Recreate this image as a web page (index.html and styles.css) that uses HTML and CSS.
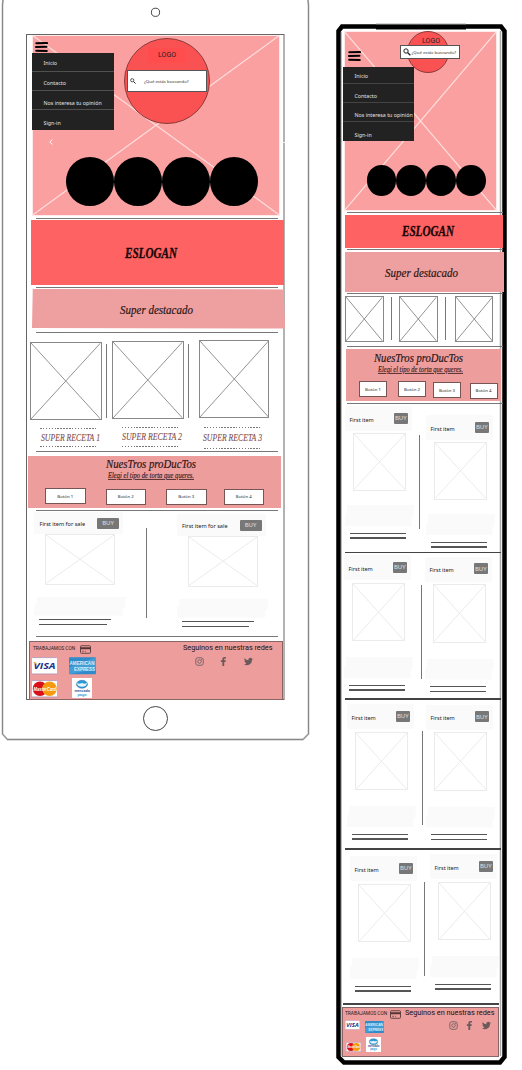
FILE: index.html
```html
<!DOCTYPE html>
<html lang="es">
<head>
<meta charset="utf-8">
<title>Pastelería</title>
<link rel="stylesheet" href="styles.css">
</head>
<body>
<svg class="defs" aria-hidden="true">
  <symbol id="cross" viewBox="0 0 100 100" preserveAspectRatio="none"><path d="M0 0L100 100M100 0L0 100" vector-effect="non-scaling-stroke"/></symbol>
  <symbol id="burger" viewBox="0 0 12 10"><path d="M.8 1.3L11.6 1.1M.4 5L11 4.7M.7 8.7L11.3 8.9" stroke="#000" stroke-width="2" stroke-linecap="round"/></symbol>
  <symbol id="search" viewBox="0 0 24 24"><circle cx="9" cy="9" r="6.5" fill="none" stroke="#222" stroke-width="3"/><path d="M14 14L22 22" stroke="#222" stroke-width="4"/></symbol>
  <symbol id="card" viewBox="0 0 22 17"><rect x="1" y="1" width="20" height="15" rx="1.5" fill="none" stroke="#644" stroke-width="2"/><path d="M1 6H21" stroke="#533" stroke-width="4"/><path d="M4 12H8M10 12H12" stroke="#644" stroke-width="1.5"/></symbol>
  <symbol id="instagram" viewBox="0 0 24 24"><g fill="none" stroke="#706060" stroke-width="2.4"><rect x="2" y="2" width="20" height="20" rx="5.5"/><circle cx="12" cy="12" r="4.7"/></g><circle cx="17.7" cy="6.3" r="1.5" fill="#706060"/></symbol>
  <symbol id="facebook" viewBox="0 0 24 24"><path fill="#6a5a5a" d="M9 24V13H5V8.700H9V6C9 2 11.300 0 15 0C16.700 0 18.500.3 18.500.3V4.200H16.500C14.500 4.200 13.900 5.300 13.900 6.600V8.700H18.200L17.500 13H13.900V24Z"/></symbol>
  <symbol id="twitter" viewBox="0 0 24 24"><path fill="#6a5a5a" d="M24 4.600a10 10 0 0 1-2.800.8 5 5 0 0 0 2.100-2.700 10 10 0 0 1-3.100 1.200 4.900 4.900 0 0 0-8.400 4.500A14 14 0 0 1 1.700 3.100a4.900 4.900 0 0 0 1.500 6.600 5 5 0 0 1-2.200-.6v.1a4.900 4.900 0 0 0 3.900 4.800 5 5 0 0 1-2.200.1 4.900 4.900 0 0 0 4.600 3.400A10 10 0 0 1 0 19.500a14 14 0 0 0 21.500-12.400A10 10 0 0 0 24 4.600z"/></symbol>
</svg>

<main class="tablet">
  <svg class="frame" width="322" height="745" fill="none">
    <path d="M3 0L2.500 5V734L7.500 739.500H303L308.500 734V5L308 0" stroke="#bbb" stroke-width="1.800"/>
    <path d="M3 0L2.500 5V734L7.500 739.500H303L308.500 734V5L308 0" stroke="#666" stroke-width=".6"/>
    <rect x="26.500" y="34.500" width="257.500" height="665" stroke="#666"/>
    <path d="M283.500 142.500H285" stroke="#fff"/>
    <circle cx="155.500" cy="12.300" r="4.100" stroke="#444"/>
    <circle cx="155.500" cy="718.500" r="12" stroke="#444"/>
  </svg>

  <header class="hero">
    <svg class="cross hero-cross"><use href="#cross"/></svg>
    <svg class="burger"><use href="#burger"/></svg>
    <nav class="menu"><a>Inicio</a><a>Contacto</a><a>Nos interesa tu opinión</a><a>Sign-in</a></nav>
    <div class="logo"><span>LOGO</span></div>
    <div class="search"><svg><use href="#search"/></svg><span>¿Qué estás buscando?</span></div>
    <svg class="chevron" viewBox="0 0 4 6"><path d="M3.500.5L.8 3L3.500 5.500" fill="none" stroke="#fff" stroke-width=".9"/></svg>
    <div class="dots"><i></i><i></i><i></i><i></i></div>
  </header>
  <hr class="rule">
  <section class="slogan"><svg width="56" height="22"><text x="1" y="15.500" textLength="52" lengthAdjust="spacingAndGlyphs" class="lobster">ESLOGAN</text></svg></section>
  <hr class="rule">
  <section class="featured"><svg width="76" height="22"><text x="1" y="15.500" textLength="73" lengthAdjust="spacingAndGlyphs" class="script">Super destacado</text></svg></section>
  <hr class="rule">
  <section class="gallery">
    <svg class="cross pic pic-a"><use href="#cross"/></svg><i class="bar"></i>
    <svg class="cross pic pic-b"><use href="#cross"/></svg><i class="bar"></i>
    <svg class="cross pic pic-c"><use href="#cross"/></svg>
  </section>
  <section class="recipes">
    <div class="recipe recipe-a"><svg><text x="1" y="11" textLength="59" lengthAdjust="spacingAndGlyphs">SUPER RECETA 1</text></svg></div>
    <div class="recipe recipe-b"><svg><text x="0" y="11.500" textLength="60" lengthAdjust="spacingAndGlyphs">SUPER RECETA 2</text></svg></div>
    <div class="recipe recipe-c"><svg><text x="1" y="11" textLength="59" lengthAdjust="spacingAndGlyphs">SUPER RECETA 3</text></svg></div>
  </section>
  <hr class="rule">
  <section class="products">
    <svg class="products-title" width="94" height="28"><text x="1" y="11.500" textLength="90" lengthAdjust="spacingAndGlyphs" class="script">NuesTros proDucTos</text><text x="3" y="22" textLength="86" lengthAdjust="spacingAndGlyphs" class="script-small">Elegi el tipo de torta que queres.</text></svg>
    <div class="buttons"><button>Botón 1</button><button>Botón 2</button><button>Botón 3</button><button>Botón 4</button></div>
  </section>
  <hr class="rule">
  <section class="shelf">
    <article class="item"><div class="item-head"><span>First item for sale</span><b>BUY</b></div><svg class="cross photo"><use href="#cross"/></svg><div class="band"></div><i class="line"></i><i class="line short"></i></article>
    <i class="split"></i>
    <article class="item second"><div class="item-head"><span>First item for sale</span><b>BUY</b></div><svg class="cross photo"><use href="#cross"/></svg><div class="band"></div><i class="line"></i><i class="line short"></i></article>
  </section>
  <hr class="rule">
  <footer class="footer">
    <div class="pay">
      <div class="pay-title"><span>TRABAJAMOS CON</span><svg><use href="#card"/></svg></div>
      <div class="brands">
        <svg class="visa" viewBox="0 0 54 34"><rect x=".7" y=".7" width="52.600" height="32.600" rx="2" fill="#fff" stroke="#a58ab0" stroke-width="1.400"/><text x="5" y="24" textLength="44" lengthAdjust="spacingAndGlyphs" class="visa-mark">VISA</text><path d="M4 10H10L12 16Z" fill="#e9a63a"/></svg>
        <svg class="amex" viewBox="0 0 54 34"><rect width="54" height="34" rx="2" fill="#2f8bc9"/><path d="M0 34V20L54 0V24Z" fill="#59afe0" opacity=".5"/><text x="1" y="15" textLength="50" lengthAdjust="spacingAndGlyphs" class="amex-mark">AMERICAN</text><text x="10" y="28" textLength="42" lengthAdjust="spacingAndGlyphs" class="amex-mark">EXPRESS</text></svg>
        <svg class="mc" viewBox="0 0 54 34"><rect x=".7" y=".7" width="52.600" height="32.600" rx="2" fill="#fff" stroke="#a58ab0" stroke-width="1.400"/><circle cx="18" cy="17" r="14.500" fill="#d8101c"/><circle cx="37" cy="17" r="14.500" fill="#f79a10"/><text x="5" y="21" textLength="45" lengthAdjust="spacingAndGlyphs" class="mc-mark">MasterCard</text></svg>
        <svg class="mp" viewBox="0 0 40 40"><rect width="40" height="40" fill="#fff"/><ellipse cx="20" cy="12.500" rx="11" ry="8" fill="#2a9bd8" stroke="#2a4f8f" stroke-width=".8"/><path d="M9.500 10Q15 13 20 10Q25 13 30.500 10L28 15Q20 20 12 15Z" fill="#e8f6fc"/><text x="5" y="27" textLength="31" lengthAdjust="spacingAndGlyphs" class="mp-mark">mercado</text><text x="11" y="35" textLength="18" lengthAdjust="spacingAndGlyphs" class="mp-mark mp-light">pago</text></svg>
      </div>
    </div>
    <div class="social"><span>Seguinos en nuestras redes</span><div class="nets"><svg><use href="#instagram"/></svg><svg><use href="#facebook"/></svg><svg><use href="#twitter"/></svg></div></div>
  </footer>
</main>

<main class="phone">
  <svg class="frame" width="200" height="1070" fill="none">
    <path d="M20 26.500H179L182.500 31V1057L178 1062.500H22L16.500 1057V31Z" stroke="#000" stroke-width="4.500"/>
    <path d="M54 27H144" stroke="#000" stroke-width="5"/>
    <path d="M54 24.200H144" stroke="#777" stroke-width="1"/>
    <path d="M178.500 31V1056" stroke="#aaa" stroke-width="1.500"/>
    <path d="M19.500 32V1056" stroke="#bbb" stroke-width="1"/>
  </svg>

  <header class="hero">
    <svg class="cross hero-cross"><use href="#cross"/></svg>
    <svg class="burger"><use href="#burger"/></svg>
    <nav class="menu"><a>Inicio</a><a>Contacto</a><a>Nos interesa tu opinión</a><a>Sign-in</a></nav>
    <div class="logo"><span>LOGO</span></div>
    <div class="search"><svg><use href="#search"/></svg><span>¿Qué estás buscando?</span></div>
    <div class="dots"><i></i><i></i><i></i><i></i></div>
  </header>
  <hr class="rule">
  <section class="slogan"><svg width="56" height="22"><text x="1" y="15.500" textLength="52" lengthAdjust="spacingAndGlyphs" class="lobster">ESLOGAN</text></svg></section>
  <hr class="rule">
  <section class="featured"><svg width="76" height="22"><text x="1" y="15.500" textLength="73" lengthAdjust="spacingAndGlyphs" class="script">Super destacado</text></svg></section>
  <hr class="rule">
  <section class="gallery">
    <svg class="cross pic pic-a"><use href="#cross"/></svg><i class="bar"></i>
    <svg class="cross pic pic-b"><use href="#cross"/></svg><i class="bar"></i>
    <svg class="cross pic pic-c"><use href="#cross"/></svg>
  </section>
  <hr class="rule">
  <section class="products">
    <svg class="products-title" width="94" height="28"><text x="1" y="13" textLength="89" lengthAdjust="spacingAndGlyphs" class="script">NuesTros proDucTos</text><text x="5" y="23" textLength="85" lengthAdjust="spacingAndGlyphs" class="script-small">Elegi el tipo de torta que queres.</text></svg>
    <div class="buttons"><button>Botón 1</button><button>Botón 2</button><button>Botón 3</button><button>Botón 4</button></div>
  </section>
  <hr class="rule">
  <section class="shelf row-one">
    <article class="item"><div class="item-head"><span>First item</span><b>BUY</b></div><svg class="cross photo"><use href="#cross"/></svg><div class="band"></div><i class="line"></i><i class="line"></i></article>
    <i class="split"></i>
    <article class="item second"><div class="item-head"><span>First item</span><b>BUY</b></div><svg class="cross photo"><use href="#cross"/></svg><div class="band"></div><i class="line"></i><i class="line"></i></article>
  </section>
  <hr class="rule thick">
  <section class="shelf row-two">
    <article class="item"><div class="item-head"><span>First item</span><b>BUY</b></div><svg class="cross photo"><use href="#cross"/></svg><div class="band"></div><i class="line"></i><i class="line"></i></article>
    <i class="split"></i>
    <article class="item second"><div class="item-head"><span>First item</span><b>BUY</b></div><svg class="cross photo"><use href="#cross"/></svg><div class="band"></div><i class="line"></i><i class="line"></i></article>
  </section>
  <hr class="rule thick">
  <section class="shelf row-three">
    <article class="item"><div class="item-head"><span>First item</span><b>BUY</b></div><svg class="cross photo"><use href="#cross"/></svg><div class="band"></div><i class="line"></i><i class="line"></i></article>
    <i class="split"></i>
    <article class="item second"><div class="item-head"><span>First item</span><b>BUY</b></div><svg class="cross photo"><use href="#cross"/></svg><div class="band"></div><i class="line"></i><i class="line"></i></article>
  </section>
  <hr class="rule thick">
  <section class="shelf row-four">
    <article class="item"><div class="item-head"><span>First item</span><b>BUY</b></div><svg class="cross photo"><use href="#cross"/></svg><div class="band"></div><i class="line"></i><i class="line"></i></article>
    <i class="split"></i>
    <article class="item second"><div class="item-head"><span>First item</span><b>BUY</b></div><svg class="cross photo"><use href="#cross"/></svg><div class="band"></div><i class="line"></i><i class="line"></i></article>
  </section>
  <hr class="rule thick last">
  <footer class="footer">
    <div class="pay">
      <div class="pay-title"><span>TRABAJAMOS CON</span><svg><use href="#card"/></svg></div>
      <div class="brands">
        <svg class="visa" viewBox="0 0 54 34"><rect x=".7" y=".7" width="52.600" height="32.600" rx="2" fill="#fff" stroke="#a58ab0" stroke-width="1.400"/><text x="5" y="24" textLength="44" lengthAdjust="spacingAndGlyphs" class="visa-mark">VISA</text><path d="M4 10H10L12 16Z" fill="#e9a63a"/></svg>
        <svg class="amex" viewBox="0 0 54 34"><rect width="54" height="34" rx="2" fill="#2f8bc9"/><path d="M0 34V20L54 0V24Z" fill="#59afe0" opacity=".5"/><text x="1" y="15" textLength="50" lengthAdjust="spacingAndGlyphs" class="amex-mark">AMERICAN</text><text x="10" y="28" textLength="42" lengthAdjust="spacingAndGlyphs" class="amex-mark">EXPRESS</text></svg>
        <svg class="mc" viewBox="0 0 54 34"><rect x=".7" y=".7" width="52.600" height="32.600" rx="2" fill="#fff" stroke="#a58ab0" stroke-width="1.400"/><circle cx="18" cy="17" r="14.500" fill="#d8101c"/><circle cx="37" cy="17" r="14.500" fill="#f79a10"/><text x="5" y="21" textLength="45" lengthAdjust="spacingAndGlyphs" class="mc-mark">MasterCard</text></svg>
        <svg class="mp" viewBox="0 0 40 40"><rect width="40" height="40" fill="#fff"/><ellipse cx="20" cy="12.500" rx="11" ry="8" fill="#2a9bd8" stroke="#2a4f8f" stroke-width=".8"/><path d="M9.500 10Q15 13 20 10Q25 13 30.500 10L28 15Q20 20 12 15Z" fill="#e8f6fc"/><text x="5" y="27" textLength="31" lengthAdjust="spacingAndGlyphs" class="mp-mark">mercado</text><text x="11" y="35" textLength="18" lengthAdjust="spacingAndGlyphs" class="mp-mark mp-light">pago</text></svg>
      </div>
    </div>
    <div class="social"><span>Seguinos en nuestras redes</span><div class="nets"><svg><use href="#instagram"/></svg><svg><use href="#facebook"/></svg><svg><use href="#twitter"/></svg></div></div>
  </footer>
</main>
</body>
</html>
```

FILE: styles.css
```css
* { box-sizing: border-box; }
body { margin: 0; width: 522px; height: 1070px; overflow: hidden; display: flex; align-items: flex-start; background: #fff; font-family: "Noto Sans", "Open Sans", sans-serif; color: #222; }
svg { display: block; flex: none; }
i { display: block; flex: none; }
.defs { position: absolute; width: 0; height: 0; }
.frame { position: absolute; left: 0; top: 0; z-index: -1; }
.tablet, .phone { position: relative; z-index: 0; flex: none; display: flex; flex-direction: column; align-items: flex-start; }
.tablet { width: 322px; padding-top: 35px; }
.phone { width: 200px; padding-top: 31px; }
section, header, footer { flex: none; }
.cross { fill: none; stroke: #777; stroke-width: .8px; }

/* Dividers */
.rule { flex: none; border: 0; height: 1px; background: #777; width: 242px; margin: 0 0 0 36px; }
.phone .rule { width: 156px; margin-left: 25px; }
.phone .thick { height: 1.5px; background: #444; margin-left: 22.5px; }
.phone .last { margin-left: 20.5px; }

/* Hero */
.hero { position: relative; background: #faa0a0; }
.tablet .hero { width: 248px; height: 180.5px; margin: 0 0 2.5px 32px; }
.phone .hero { width: 153px; height: 180px; margin: 0 0 1px 22px; }
.hero-cross { width: 100%; height: 100%; stroke: #ffdcdc; stroke-width: 1.2px; outline: 1px solid #ffe9e9; outline-offset: -1px; }
.burger { position: absolute; width: 13px; height: 10px; }
.tablet .burger { left: 3px; top: 6.5px; }
.phone .burger { left: 3.5px; top: 20px; }
.menu { position: absolute; background: #222; color: #e4e4e4; font-size: 5.300px; line-height: 20px; white-space: nowrap; }
.menu a { display: block; }
.tablet .menu { left: 0; top: 18px; width: 82px; height: 76.500px; padding-left: 11.5px; background: linear-gradient(#505050, #505050) 0 18px / 100% 1px no-repeat, linear-gradient(#505050, #505050) 0 37px / 100% 1px no-repeat, linear-gradient(#505050, #505050) 0 56px / 100% 1px no-repeat, #222; }
.phone .menu { left: -1px; top: 36px; width: 70.500px; height: 73.500px; padding-left: 11.5px; background: linear-gradient(#444, #444) 0 16px / 100% 1px no-repeat, linear-gradient(#444, #444) 0 35px / 100% 1px no-repeat, linear-gradient(#444, #444) 0 54px / 100% 1px no-repeat, #222; line-height: 19.600px; }
.logo { position: absolute; border: 1px solid #8a3a3a; border-radius: 50%; background: #fa5252; display: flex; justify-content: center; align-items: flex-start; font: 7px/15px Roboto, sans-serif; }
.logo span { background: #ff4d4d; }
.tablet .logo { left: 92px; top: 2.500px; width: 86px; height: 86px; padding-top: 9px; }
.tablet .logo span { padding: 0 10px; }
.phone .logo { left: 63px; top: 0; width: 42px; height: 42px; padding: 2px 0 0 6px; }
.phone .logo span { background: none; }
.search { position: absolute; display: flex; align-items: center; background: #fff; border: 1px solid #555; color: #333; white-space: nowrap; font-size: 4.300px; line-height: 6px; }
.tablet .search { left: 94.500px; top: 34.500px; width: 80.500px; height: 22px; padding-left: 2.500px; gap: 8px; }
.tablet .search svg { width: 6px; height: 6px; }
.phone .search { left: 56px; top: 14px; width: 60px; height: 13.500px; padding-left: 1.500px; gap: 1px; }
.phone .search svg { width: 8px; height: 8px; }
.chevron { position: absolute; left: 17px; top: 104px; width: 4px; height: 6px; }
.dots { position: absolute; display: flex; }
.dots i { border-radius: 50%; background: #000; }
.tablet .dots { left: 33.500px; top: 122px; }
.tablet .dots i { width: 48.200px; height: 48.800px; }
.phone .dots { left: 22.500px; top: 134px; }
.phone .dots i { width: 29.800px; height: 30.600px; }

/* Banners */
.slogan, .featured { display: flex; align-items: center; }
.slogan { background: #ff6262; }
.featured { background: #ee9f9f; }
.tablet .slogan { width: 253px; height: 65px; margin: 1px 0 2px 31px; padding-left: 92.500px; }
.tablet .featured { width: 253px; height: 39.500px; margin: 1px 0 3.500px 32px; padding-left: 87px; clip-path: polygon(.3% 0, 99.5% 1%, 100% 100%, 0 99%); }
.phone .slogan { width: 158px; height: 32.500px; margin: 2px 0 1.500px 23px; padding-left: 56px; }
.phone .featured { width: 159px; height: 39.500px; margin: 2px 0 1.500px 23px; padding-left: 39px; }
.lobster { font: italic bold 14px "Liberation Serif", serif; fill: #160606; stroke: #160606; stroke-width: .3px; }
.script { font: italic 13.500px "Liberation Serif", serif; fill: #2a1515; stroke: #2a1515; stroke-width: .2px; }
.script-small { font: italic 7.500px "Liberation Serif", serif; fill: #3a1c1c; stroke: #3a1c1c; stroke-width: .15px; text-decoration: underline; }

/* Recipe pictures */
.gallery { display: flex; align-items: flex-start; }
.pic { border: 1px solid #888; }
.bar, .split { width: 1px; background: #777; }
.tablet .gallery { height: 80px; margin: 7px 0 0 30px; }
.tablet .pic { width: 71.500px; height: 78px; }
.tablet .pic-a { margin: 2px 4.500px 0 0; }
.tablet .pic-b { margin: 1px 4.500px 0 5px; }
.tablet .pic-c { width: 70.500px; margin-left: 9.500px; }
.tablet .bar { height: 74px; margin-top: 3.500px; }
.phone .gallery { height: 46px; margin: 2px 0 4px 23px; }
.phone .pic { width: 38.500px; height: 46px; }
.phone .bar { height: 43px; margin: 1px 7px 0 7.500px; }
.phone .pic-c { margin-left: 1.500px; }
.recipes { display: flex; height: 31px; margin-left: 40px; }
.recipe { width: 56px; padding: 1px 0; background: repeating-linear-gradient(90deg, #777 0 1.500px, transparent 1.500px 2.900px) 0 0 / 100% 1.300px no-repeat, repeating-linear-gradient(90deg, #777 0 1.500px, transparent 1.500px 2.900px) 0 100% / 100% 1.300px no-repeat; }
.recipe svg { overflow: visible; width: 56px; height: 16px; }
.recipe text { font: italic 9.500px "Liberation Serif", serif; fill: #7d4b4b; stroke: #7d4b4b; stroke-width: .1px; }
.recipe-a { height: 19px; margin-top: 8px; }
.recipe-b { height: 20.500px; margin: 7px 0 0 26px; }
.recipe-c { height: 22.500px; margin: 7px 0 0 26px; }
.recipe-a svg { margin-top: 1px; }
.recipe-c svg { margin: 2px 0 0 -2px; }

/* Product filter */
.products { background: #ee9d9d; }
.tablet .products { width: 253px; height: 52px; margin: 3.500px 0 2.500px 28px; }
.phone .products { width: 155px; height: 52.500px; margin: 1.500px 0 2px 24px; }
.products-title { margin-left: 77px; }
.phone .products-title { margin-left: 27px; }
.buttons { display: flex; }
.buttons button { flex: none; padding: 0; border: 1px solid #755; background: #fff; color: #222; font: 4.300px/1 "Noto Sans", sans-serif; }
.tablet .buttons { margin: 5px 0 0 17px; gap: 20px; }
.tablet button { width: 40.500px; height: 16px; }
.tablet button:first-child { margin-top: -.5px; margin-bottom: .5px; }
.tablet button:last-child { margin-left: -3px; }
.phone .buttons { margin: 4.500px 0 0 13px; gap: 7px; }
.phone button { width: 28px; height: 16px; }
.phone button:nth-child(2) { margin-left: 4px; }
.phone button:nth-child(3) { margin-top: 1px; }
.phone button:nth-child(4) { margin: 1.500px 0 0 1.500px; }

/* Items for sale */
.shelf { display: flex; align-items: flex-start; }
.item { flex: none; }
.item-head { position: relative; display: flex; align-items: center; background: #fafafa; border-radius: 2px; white-space: nowrap; }
.item-head b { flex: none; display: flex; align-items: center; justify-content: center; background: #777; border-radius: 1px; color: #e0e0e0; font-weight: 400; font-size: 6px; line-height: 8px; }
.photo { border: 1px solid #ebebeb; stroke: #e6e6e6; stroke-width: .8px; }
.band { background: #fafafa; clip-path: polygon(3% 0, 100% 0, 99% 58%, 96.500% 60%, 96.500% 100%, 0 100%, .5% 42%, 3% 40%); }
.line { height: 1.400px; background: #555; }
.tablet .shelf { height: 124px; margin: 1px 0 0 34px; }
.tablet .item { width: 92px; }
.tablet .second { margin: 2px 0 0 30px; }
.tablet .item-head { width: 89px; height: 22px; padding: 1px 4px 0 5.500px; justify-content: space-between; font-size: 5.600px; }
.tablet .item-head b { width: 22px; height: 11px; margin-top: -1px; }
.tablet .photo { width: 70px; height: 50.500px; margin-left: 11px; }
.tablet .band { height: 19px; margin-top: 12px; }
.tablet .line { width: 72px; margin: 3.500px 0 0 5px; }
.tablet .line.short { width: 67.500px; }
.tablet .split { height: 90px; margin: 16px 0 0 19.500px; }

.phone .item { width: 69px; }
.phone .item-head { width: 67px; height: 25px; padding: 2.500px 4px 0 4.500px; justify-content: space-between; font-size: 5.500px; }
.phone .item-head b { width: 14.500px; height: 11px; margin-top: -3.500px; }
.phone .photo { width: 53px; height: 58.500px; margin: 2.500px 0 0 8px; }
.phone .band { height: 21px; margin-top: 16px; }
.phone .line { width: 56.500px; margin: 3.600px 0 0 4.500px; }
.phone .band + .line { margin-top: 6.500px; }
.phone .split { height: 94px; }
.row-one { height: 147.500px; padding: 2px 0 0 23px; }
.row-one .photo { height: 57.500px; margin-top: 2px; }
.row-one .band { margin-top: 14.500px; }
.row-one .split { margin: 29px 0 0 5px; }
.row-one .second { margin: 9px 0 0 6px; }
.row-two { height: 145px; padding: 2px 0 0 22px; }
.row-two .split { margin: 30px 0 0 7.500px; }
.row-two .second { margin: 1.500px 0 0 3.500px; }
.row-three { height: 148.500px; padding: 4.500px 0 0 25px; }
.row-three .split { margin: 27px 0 0 5.500px; }
.row-three .second { margin: .5px 0 0 3.500px; }
.row-four { height: 153.500px; padding: 6.500px 0 0 28px; }
.row-four .second { margin: -2px 0 0 5px; }
.row-four .split { margin: 26px 0 0 5px; }

/* Footer */
.footer { display: flex; justify-content: space-between; background: #ee9d9d; border: 1px solid #866; font-family: Roboto, sans-serif; white-space: nowrap; }
.tablet .footer { width: 254px; height: 58.500px; margin: 4px 0 0 29px; padding: 1px 9.500px 0 1px; }
.phone .footer { width: 157px; height: 49.500px; margin: 2.500px 0 0 20px; padding: 0 3.500px 0 1.500px; }
.pay-title { display: flex; align-items: center; font-size: 4.800px; line-height: 10px; }
.tablet .pay-title { padding: 1px 0 0 2px; gap: 5px; }
.phone .pay-title { padding: 1px 0 0 .5px; gap: 3px; }
.pay-title svg { width: 11px; height: 9px; }
.brands { display: grid; }
.tablet .brands { grid-template-columns: 38px 27px; margin-top: 3px; }
.tablet .brands svg { width: 27px; height: 17.500px; }
.tablet .brands .mc { margin-top: 5.500px; }
.tablet .brands .mp { width: 20px; height: 20px; margin: 3px 0 0 3px; }
.phone .brands { grid-template-columns: 20px 19px; margin-top: 1px; }
.phone .brands .visa { width: 15px; height: 10px; }
.phone .brands .amex { width: 19px; height: 12px; margin-top: 1px; }
.phone .brands .mc { width: 15px; height: 10px; margin: 8.500px 0 0 1px; }
.phone .brands .mp { width: 15px; height: 15px; margin: 4px 0 0 1px; }
.visa-mark { font: italic bold 19px "Open Sans", sans-serif; fill: #1a2f8a; }
.amex-mark { font: bold 10px "Liberation Sans", sans-serif; fill: #d8f0ff; }
.mc-mark { font: italic bold 10px "Liberation Sans", sans-serif; fill: #fff; }
.mp-mark { font: bold 7px "Liberation Sans", sans-serif; fill: #2a4f8f; }
.mp-light { fill: #2a9bd8; }
.social { font-size: 7.300px; line-height: 9px; color: #221111; }
.nets { display: flex; }
.nets svg { width: 9px; height: 9px; }
.tablet .nets { gap: 15.500px; margin: 4.500px 0 0 12px; }
.phone .nets { gap: 7.500px; margin: 3.500px 0 0 44px; }
```
